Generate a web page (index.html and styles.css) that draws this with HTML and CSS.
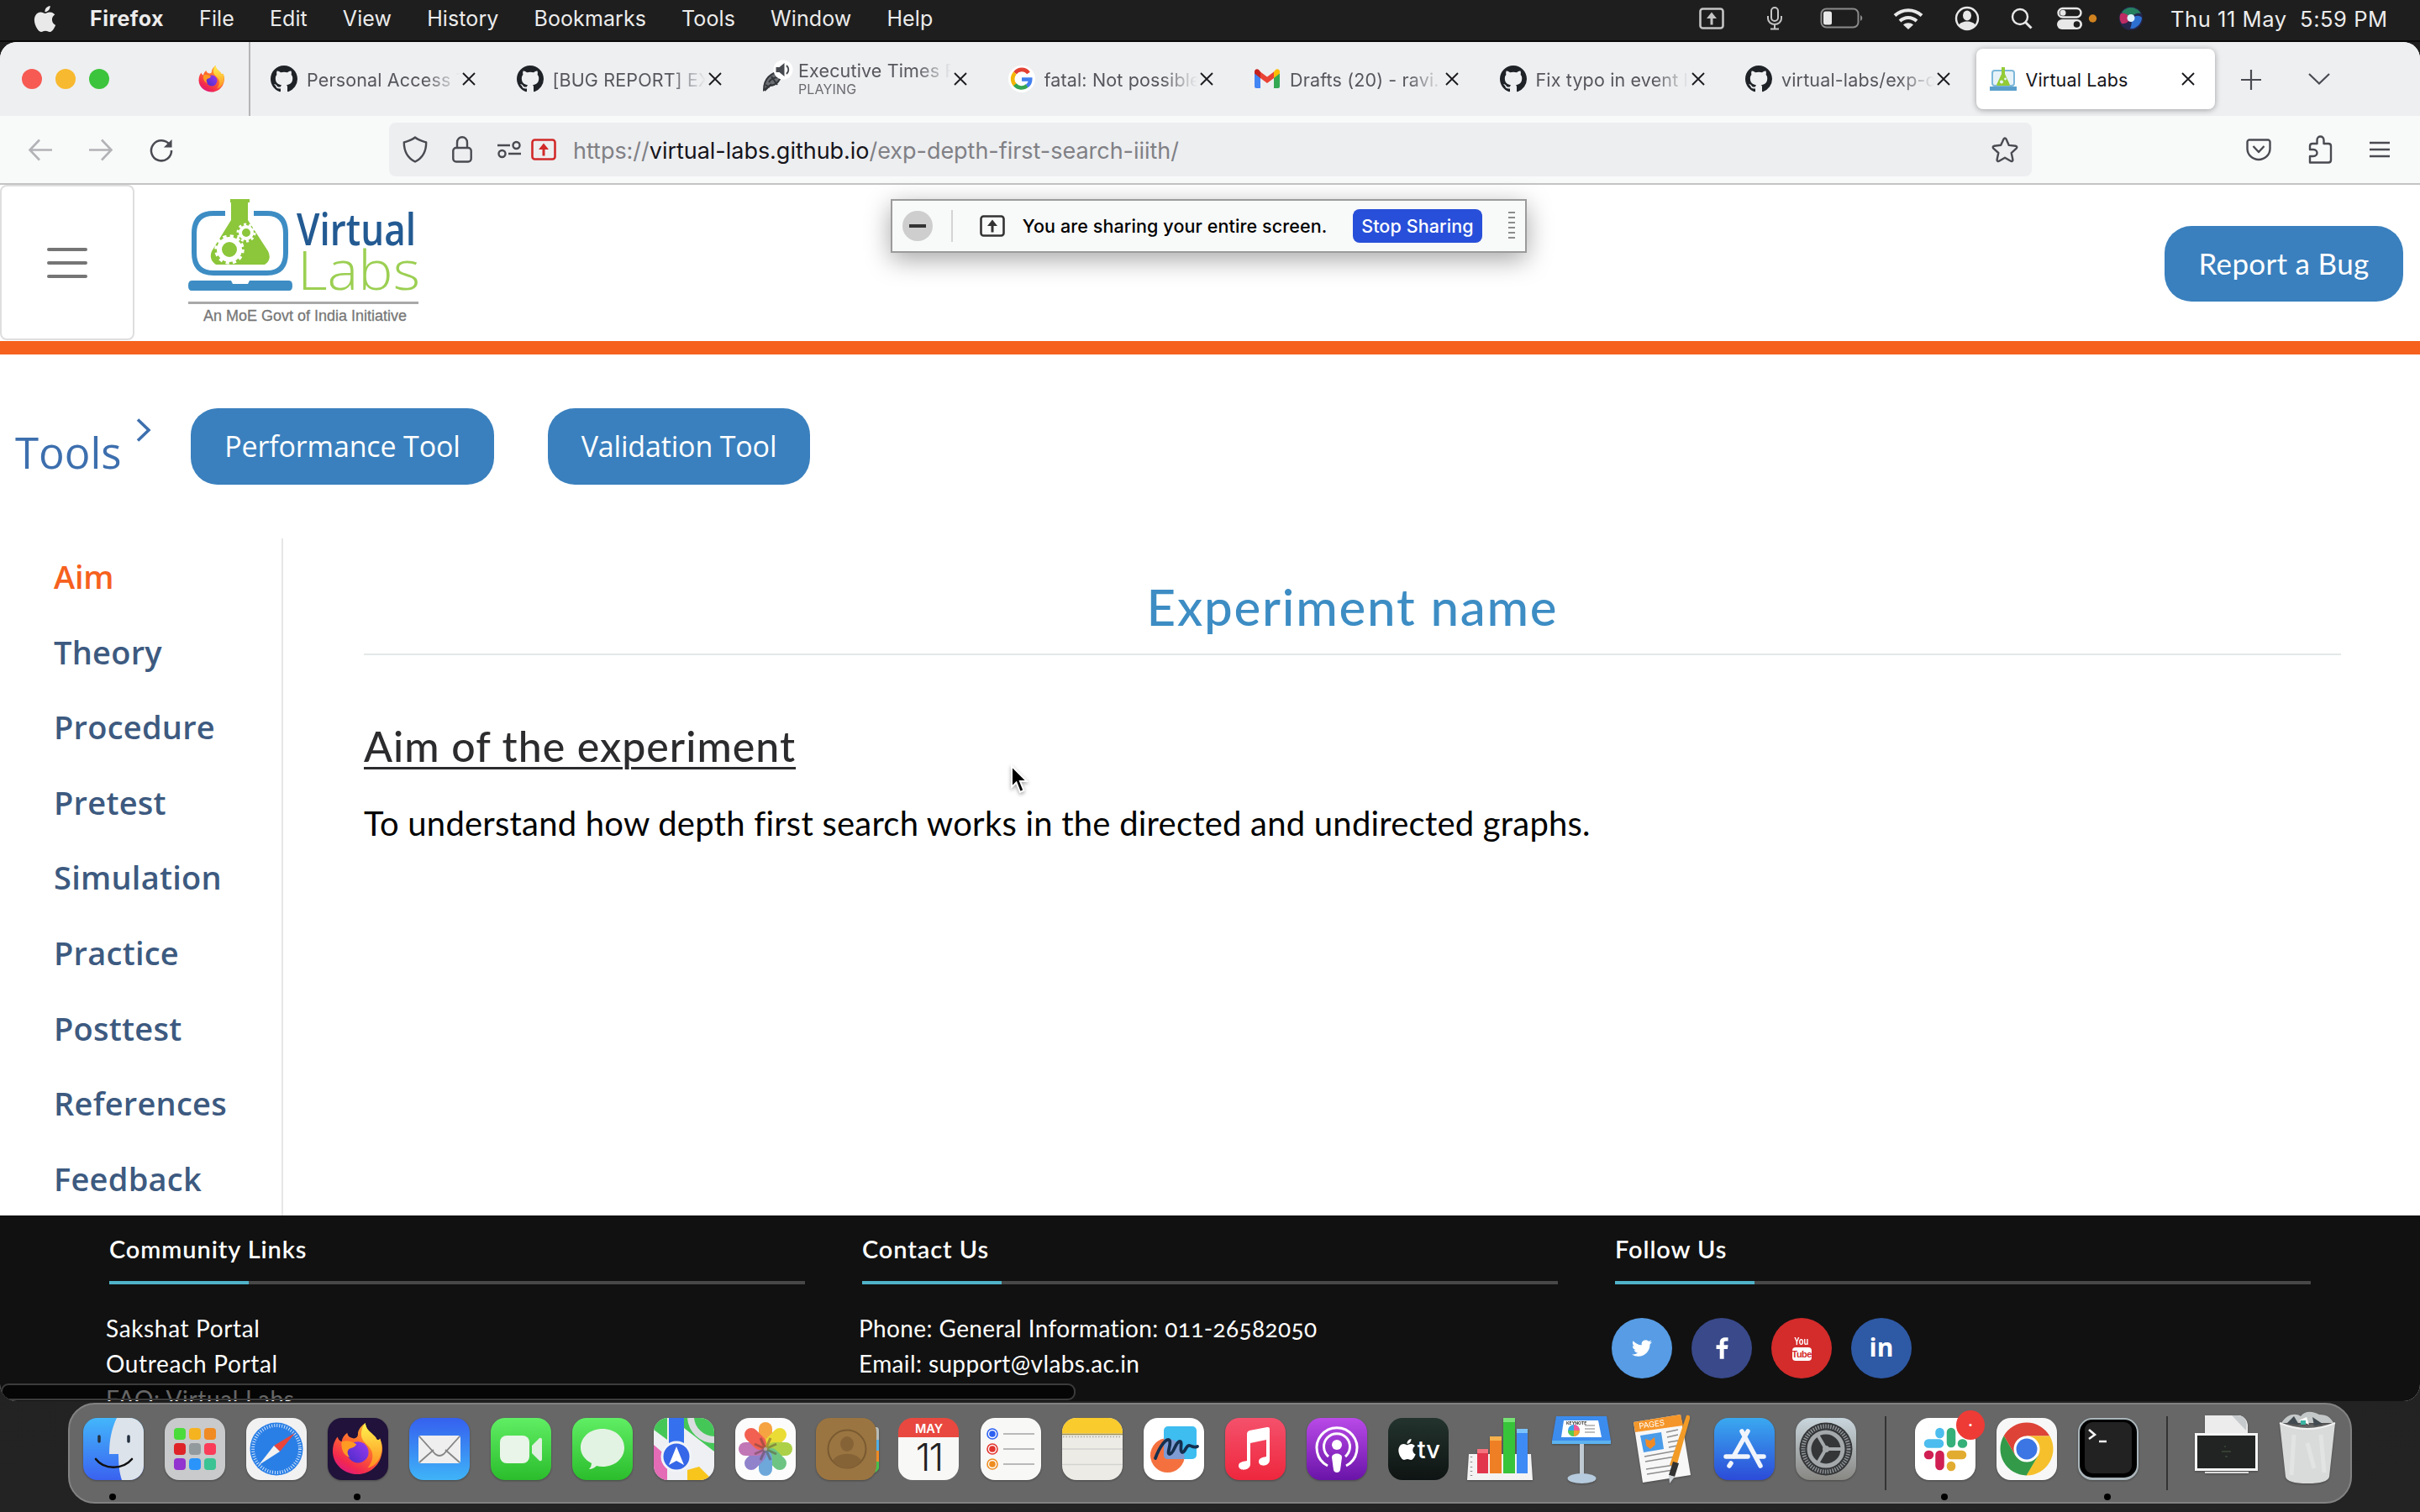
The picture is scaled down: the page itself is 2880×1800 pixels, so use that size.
FILE: index.html
```html
<!DOCTYPE html>
<html lang="en">
<head>
<meta charset="utf-8">
<title>Virtual Labs</title>
<link rel="stylesheet" href="styles.css">
</head>
<body>
<svg class="defs" width="0" height="0" aria-hidden="true">
  <defs>
    <symbol id="github" viewBox="0 0 16 16"><path fill="#1f2328" d="M8 0C3.58 0 0 3.58 0 8c0 3.54 2.29 6.53 5.47 7.59.4.07.55-.17.55-.38 0-.19-.01-.82-.01-1.49-2.01.37-2.53-.49-2.69-.94-.09-.23-.48-.94-.82-1.13-.28-.15-.68-.52-.01-.53.63-.01 1.08.58 1.23.82.72 1.21 1.87.87 2.33.66.07-.52.28-.87.51-1.07-1.78-.2-3.64-.89-3.64-3.95 0-.87.31-1.59.82-2.15-.08-.2-.36-1.02.08-2.12 0 0 .67-.21 2.2.82.64-.18 1.32-.27 2-.27.68 0 1.36.09 2 .27 1.53-1.04 2.2-.82 2.2-.82.44 1.1.16 1.92.08 2.12.51.56.82 1.27.82 2.15 0 3.07-1.87 3.75-3.65 3.95.29.25.54.73.54 1.48 0 1.07-.01 1.93-.01 2.2 0 .21.15.46.55.38A8.013 8.013 0 0016 8c0-4.42-3.58-8-8-8z"/></symbol>
    <symbol id="apple" viewBox="0 0 24 24"><path d="M12.152 6.896c-.948 0-2.415-1.078-3.96-1.04-2.04.027-3.91 1.183-4.961 3.014-2.117 3.675-.546 9.103 1.519 12.09 1.013 1.454 2.208 3.09 3.792 3.039 1.52-.065 2.09-.987 3.935-.987 1.831 0 2.35.987 3.96.948 1.637-.026 2.676-1.48 3.676-2.948 1.156-1.688 1.636-3.325 1.662-3.415-.039-.013-3.182-1.221-3.22-4.857-.026-3.04 2.48-4.494 2.597-4.559-1.429-2.09-3.623-2.324-4.39-2.376-2-.156-3.675 1.09-4.61 1.09zM15.53 3.83c.843-1.012 1.4-2.427 1.245-3.83-1.207.052-2.662.805-3.532 1.818-.78.896-1.454 2.338-1.273 3.714 1.338.104 2.715-.688 3.559-1.701"/></symbol>
    <symbol id="close" viewBox="0 0 18 18"><path d="M2 2l14 14M16 2L2 16" stroke="#1c1c20" stroke-width="1.9" fill="none"/></symbol>
    <symbol id="share" viewBox="0 0 30 26"><rect x="1.5" y="1.5" width="27" height="23" rx="3" fill="none" stroke="currentColor" stroke-width="2.6"/><path d="M15 5.500l6 7.500h-4.500v7.500h-3V13H9z" fill="currentColor"/></symbol>
    <symbol id="fox" viewBox="0 0 64 64">
      <path fill="url(#foxBody)" d="M7 17c1 4 3 5 5 6 1-6 4-9 7-11 0 4 3 6 8 7 5-1 5-4 5-7 1-5 5-9 9-12 1 7 4 9 8 13 3 3 5 4 6 7 2 1 3 1 4-1 3 7 4 13 2 20-3 14-15 24-29 24C16 63 2 52 1 36 1 27 3 22 7 17z"/>
      <path fill="url(#foxTail)" d="M41 0c1 7 4 9 8 13 3 3 5 4 6 7 2 1 3 1 4-1 3 9 3 17-1 25-3 6-9 10-14 11 7-8 8-18 2-25-4-5-9-7-10-15 0-6 2-12 5-15z"/>
      <circle cx="32" cy="36" r="13" fill="url(#foxOrb)"/>
      <path fill="#ff9a22" d="M12 23c6-2 12-1 18 3-1 4-6 4-9 6-3 3-2 7 1 10-8-2-11-10-10-19z"/>
    </symbol>
    <linearGradient id="foxBody" x1=".8" y1="0" x2=".2" y2="1"><stop offset="0" stop-color="#ffbd2e"/><stop offset=".45" stop-color="#ff6a2f"/><stop offset=".8" stop-color="#f2284f"/><stop offset="1" stop-color="#d9188a"/></linearGradient>
    <linearGradient id="foxTail" x1="0" y1="0" x2="0" y2="1"><stop offset="0" stop-color="#fff44f"/><stop offset="1" stop-color="#ff8f20"/></linearGradient>
    <linearGradient id="foxOrb" x1="1" y1="0" x2="0" y2="1"><stop offset="0" stop-color="#9a3bf0"/><stop offset="1" stop-color="#4a2bc8"/></linearGradient>
  </defs>
</svg>

<div class="desktop">
  <header class="menubar">
    <svg class="apple"><use href="#apple"/></svg>
    <nav class="menus">
      <span class="menu app">Firefox</span><span class="menu">File</span><span class="menu">Edit</span><span class="menu">View</span><span class="menu">History</span><span class="menu">Bookmarks</span><span class="menu">Tools</span><span class="menu">Window</span><span class="menu">Help</span>
    </nav>
    <div class="status">
      <svg class="s-share"><use href="#share"/></svg>
      <svg viewBox="0 0 20 28" width="20" height="28"><g fill="none" stroke="#c4c4c4" stroke-width="2"><rect x="6" y="1" width="8" height="16" rx="4"/><path d="M2 11v3a8 7 0 0016 0v-3M10 21v5M5 26.500h10"/></g></svg>
      <svg viewBox="0 0 52 26" width="52" height="26"><rect x="1.500" y="1.500" width="44" height="22" rx="6" fill="none" stroke="#8b8b8b" stroke-width="2"/><rect x="4" y="4.500" width="10" height="16" rx="2.500" fill="#e8e8e8"/><path d="M48 9c3 1.500 3 5.500 0 7z" fill="#8b8b8b"/></svg>
      <svg viewBox="0 0 36 26" width="36" height="26"><g fill="none" stroke="#e8e8e8" stroke-width="4"><path d="M2 9.500c9-8.500 23-8.500 32 0"/><path d="M8 16c6-5.500 14-5.500 20 0"/></g><path d="M12 20.500c3.500-3 8.500-3 12 0l-6 5.500z" fill="#e8e8e8"/></svg>
      <svg viewBox="0 0 30 30" width="30" height="30"><circle cx="15" cy="15" r="13" fill="none" stroke="#e8e8e8" stroke-width="2.400"/><ellipse cx="15" cy="11.500" rx="5" ry="6" fill="#e8e8e8"/><path d="M5 23c3-6 17-6 20 0-5 6-15 6-20 0z" fill="#e8e8e8"/></svg>
      <svg viewBox="0 0 26 26" width="26" height="26"><circle cx="11" cy="11" r="9" fill="none" stroke="#e8e8e8" stroke-width="2.400"/><path d="M17.500 17.500l7 7" stroke="#e8e8e8" stroke-width="3"/></svg>
      <svg viewBox="0 0 48 28" width="48" height="28"><rect x="1.500" y="2" width="27" height="10.500" rx="5.250" fill="none" stroke="#e8e8e8" stroke-width="2.400"/><circle cx="7" cy="7.200" r="3.500" fill="#e8e8e8"/><rect x="0" y="15" width="30" height="12" rx="6" fill="#e8e8e8"/><circle cx="23.500" cy="21" r="3.800" fill="#1e1e1e"/><circle cx="42.500" cy="14" r="4.700" fill="#d0821f"/></svg>
      <svg viewBox="0 0 28 28" width="28" height="28"><circle cx="14" cy="14" r="14" fill="#24264c"/><path d="M3 7C9-2 22 0 26 8c-6-1-8 1-12 5z" fill="#258060"/><path d="M2 8c5-1 9 2 12 6-3 4-7 7-11 6-3-4-3-9-1-12z" fill="#bd2c62"/><path d="M14 14c6-4 10-4 13-1 0 6-6 14-14 13 2-4 2-8 1-12z" fill="#2c6fd0"/><circle cx="14" cy="13.500" r="4.500" fill="#dff2ff"/></svg>
      <span class="clock">Thu 11 May&nbsp; 5:59 PM</span>
    </div>
  </header>

  <main class="window">
    <div class="tabstrip">
      <div class="lights"><i class="red"></i><i class="amber"></i><i class="green"></i></div>
      <svg class="view-fox"><use href="#fox"/></svg>
      <div class="tabs">
        <div class="tab"><svg class="fav"><use href="#github"/></svg><span class="label fade">Personal Access T</span><svg class="x"><use href="#close"/></svg></div>
        <div class="tab"><svg class="fav"><use href="#github"/></svg><span class="label fade">[BUG REPORT] EX</span><svg class="x"><use href="#close"/></svg></div>
        <div class="tab"><svg class="fav wide" viewBox="0 0 36 40"><g fill="none" stroke="#33363a" stroke-width="2"><path d="M2 36c0-13 8-21 21-22 0 10-6 17-14 17z" fill="#6b6e72"/><path d="M3 37l8-8M8 27c3-5 8-6 12-6M11 20l7 10M4 30l5 3"/></g><circle cx="25" cy="12" r="11.500" fill="#fff"/><path d="M16.500 9h4l6-5v16l-6-5h-4z" fill="#46494e"/><path d="M29 7c3 3 3 7 0 10" fill="none" stroke="#46494e" stroke-width="2"/></svg><span class="label duo fade"><span>Executive Times F</span><small>PLAYING</small></span><svg class="x"><use href="#close"/></svg></div>
        <div class="tab"><svg class="fav" viewBox="0 0 32 32"><circle cx="16" cy="16" r="16" fill="#fff"/><g fill="none" stroke-width="4.600"><path d="M24 9a10 10 0 00-16-.2" stroke="#e34133"/><path d="M8 8.800a10.500 10.500 0 000 14.400" stroke="#f3b605"/><path d="M7.800 22.800a10 10 0 0014.500 1.100" stroke="#34a553"/><path d="M16 16.500h10.200c0 3.500-1.300 6-4 7.800" stroke="#4280ef"/></g></svg><span class="label fade">fatal: Not possible</span><svg class="x"><use href="#close"/></svg></div>
        <div class="tab"><svg class="fav" viewBox="0 0 32 32"><path d="M1 8v17q0 2 2 2h5V13z" fill="#4285f4"/><path d="M31 8v17q0 2-2 2h-5V13z" fill="#34a853"/><path d="M24 7.500V15l7-5.500V7.500c0-3-3-4-5-2.500z" fill="#fbbc04"/><path d="M8 7.500V15l8 6 8-6V7.500l-8 6z" fill="#ea4335"/><path d="M8 7.500V15L1 9.500v-2C1 4.500 4 3.500 6 5z" fill="#c5221f"/></svg><span class="label fade">Drafts (20) - ravi.</span><svg class="x"><use href="#close"/></svg></div>
        <div class="tab"><svg class="fav"><use href="#github"/></svg><span class="label fade">Fix typo in event l</span><svg class="x"><use href="#close"/></svg></div>
        <div class="tab"><svg class="fav"><use href="#github"/></svg><span class="label fade">virtual-labs/exp-d</span><svg class="x"><use href="#close"/></svg></div>
        <div class="tab active"><svg class="fav" viewBox="0 0 32 32"><rect x="3" y="6" width="26" height="18" rx="3" fill="#e7f2f8" stroke="#7db8da" stroke-width="2"/><path d="M14 2h4v8l6 13q0 1-2 1H10q-2 0-2-1l6-13z" fill="#93cb36"/><circle cx="14" cy="19.500" r="2" fill="#e7f2f8"/><circle cx="18.500" cy="16" r="1.400" fill="#e7f2f8"/><path d="M0 25h32v5H0z" fill="#5a9fcc"/></svg><span class="label">Virtual Labs</span><svg class="x"><use href="#close"/></svg></div>
      </div>
      <svg class="newtab" viewBox="0 0 24 24"><path d="M12 0v24M0 12h24" stroke="#4a4a52" stroke-width="2.200"/></svg>
      <svg class="alltabs" viewBox="0 0 26 14"><path d="M1 1l12 11.500L25 1" fill="none" stroke="#4a4a52" stroke-width="2.200"/></svg>
    </div>

    <div class="toolbar">
      <svg class="nav dim" viewBox="0 0 28 26"><path d="M28 13H2M13 1L1.500 13 13 25"/></svg>
      <svg class="nav dim" viewBox="0 0 28 26"><path d="M0 13h26M15 1l11.500 12L15 25"/></svg>
      <svg class="nav" viewBox="0 0 28 28"><path d="M24.500 8A12.500 12.500 0 1026.500 14.500"/><path d="M27 1v10H17z" fill="#4a4a52" stroke="none"/></svg>
      <div class="urlbar">
        <svg class="u" viewBox="0 0 30 32"><path d="M15 1.500C11 5 6 6 1.800 7.500c0 11 4 18.500 13.200 23 9.200-4.500 13.200-12 13.200-23C24 6 19 5 15 1.500z"/></svg>
        <svg class="u" viewBox="0 0 24 32"><rect x="1.300" y="14" width="21.400" height="16.500" rx="3.500"/><path d="M6 14V8c0-9 12-9 12 0v6"/></svg>
        <svg class="u" viewBox="0 0 28 20"><path d="M0 5h15M13 15h15"/><circle cx="22.500" cy="5" r="4"/><circle cx="5.500" cy="15" r="4"/></svg>
        <svg class="u-share"><use href="#share"/></svg>
        <span class="url">https://<b>virtual-labs.github.io</b>/exp-depth-first-search-iiith/</span>
        <svg class="star" viewBox="0 0 32 32"><path d="M16 2.500c.7 0 1.200.4 1.500 1l3.300 7.400 8 .9c1.500.2 2 1.900.9 2.900l-6 5.400 1.700 7.900c.3 1.400-1.200 2.500-2.400 1.800L16 25.800l-7 4c-1.200.7-2.700-.4-2.400-1.800L8.300 20l-6-5.400c-1.100-1-.6-2.700.9-2.900l8-.9 3.300-7.300c.3-.6.8-1 1.500-1z"/></svg>
      </div>
      <svg class="t t1" viewBox="0 0 30 28"><path d="M4 2.500h22a2.500 2.500 0 012.500 2.500v8a13.500 13 0 01-27 0V5A2.500 2.500 0 014 2.500zM8.500 10l6.500 7 6.500-7"/></svg>
      <svg class="t t2" viewBox="0 0 30 34"><path d="M3 32.500h22q3 0 3-3V13q0-3-3-3h-5.500V6c0-6-8-6-8 0v4H6q-3 0-3 3v4h4c6 0 6 8 0 8H3z"/></svg>
      <svg class="t t3" viewBox="0 0 24 20"><path d="M0 2h24M0 10h24M0 18h24"/></svg>
    </div>

    <section class="page">
      <header class="site-header">
        <button class="toggler" aria-label="Menu"><i></i><i></i><i></i></button>
        <svg class="logo" viewBox="224 236 278 152">
          <path d="M268 254h-14q-23 0-23 24v23q0 24 23 24h64q22 0 22-24v-23q0-24-22-24h-16" fill="none" stroke="#3d8dc4" stroke-width="6"/>
          <path d="M274 237h23v4h-2v21l24 37q5 10-4 16h-58q-9-6-5-16l23-37v-21h-1z" fill="#8cc63b"/>
          <circle cx="273" cy="297" r="12" fill="none" stroke="#fff" stroke-width="6"/><circle cx="273" cy="297" r="16" fill="none" stroke="#fff" stroke-width="3.500" stroke-dasharray="4.200 4.200"/>
          <circle cx="293" cy="277" r="7" fill="none" stroke="#fff" stroke-width="4"/><circle cx="293" cy="277" r="10" fill="none" stroke="#fff" stroke-width="3" stroke-dasharray="3 3.280"/>
          <path d="M228 334h47l2 4h18l2-4h47q4 0 4 6t-4 6H228q-4 0-4-6t4-6z" fill="#3d8dc4"/>
          <text x="353" y="291.500" class="logo-virtual" textLength="142" lengthAdjust="spacingAndGlyphs">Virtual</text>
          <text x="354" y="345" class="logo-labs" textLength="146" lengthAdjust="spacingAndGlyphs">Labs</text>
          <path d="M224 360.500h274" stroke="#a9a9a9" stroke-width="3"/>
          <text x="242" y="382" class="logo-sub" textLength="242" lengthAdjust="spacingAndGlyphs">An MoE Govt of India Initiative</text>
        </svg>
        <button class="pill bug">Report a Bug</button>
      </header>

      <div class="tools">
        <span class="tools-title">Tools</span>
        <svg class="tools-chev" viewBox="0 0 18 28"><path d="M2 1.500L15 14 2 26.500"/></svg>
        <button class="pill perf">Performance Tool</button>
        <button class="pill valid">Validation Tool</button>
      </div>

      <div class="body">
        <nav class="sidebar">
          <a class="current">Aim</a><a>Theory</a><a>Procedure</a><a>Pretest</a><a>Simulation</a><a>Practice</a><a>Posttest</a><a>References</a><a>Feedback</a>
        </nav>
        <article class="content">
          <h1>Experiment name</h1>
          <h2>Aim of the experiment</h2>
          <p>To understand how depth first search works in the directed and undirected graphs.</p>
        </article>
      </div>

      <footer class="footer">
        <div class="col">
          <h3>Community Links</h3>
          <p class="wide">Sakshat Portal</p><p class="wide">Outreach Portal</p><p class="wide">FAQ: Virtual Labs</p>
        </div>
        <div class="col">
          <h3>Contact Us</h3>
          <p>Phone: General Information: 011-26582050</p><p>Email: support@vlabs.ac.in</p>
        </div>
        <div class="col">
          <h3>Follow Us</h3>
          <div class="social">
            <a class="tw"><svg viewBox="0 0 24 24" width="24" height="24"><path fill="#fff" d="M23.953 4.570a10 10 0 01-2.825.775 4.958 4.958 0 002.163-2.723c-.951.555-2.005.959-3.127 1.184a4.920 4.920 0 00-8.384 4.482C7.690 8.095 4.067 6.130 1.640 3.162a4.822 4.822 0 00-.666 2.475c0 1.710.870 3.213 2.188 4.096a4.904 4.904 0 01-2.228-.616v.060a4.923 4.923 0 003.946 4.827 4.996 4.996 0 01-2.212.085 4.936 4.936 0 004.604 3.417 9.867 9.867 0 01-6.102 2.105c-.390 0-.779-.023-1.170-.067a13.995 13.995 0 007.557 2.209c9.053 0 13.998-7.496 13.998-13.985 0-.210 0-.420-.015-.630A9.935 9.935 0 0024 4.590z"/></svg></a>
            <a class="fb"><svg viewBox="5 0 14 24" width="15" height="26"><path fill="#fff" d="M14 24V13h4l.6-4.400H14V6c0-1.300.4-2 2.200-2h2.400V.2C18.100.1 16.800 0 15.200 0 11.700 0 9.400 2.100 9.400 5.700V8.600H5.500V13h3.900v11z"/></svg></a>
            <a class="yt"><span class="you">You</span><span class="tube">Tube</span></a>
            <a class="li">in</a>
          </div>
        </div>
      </footer>
      <div class="hscroll"></div>
    </section>

    <div class="sharebar">
      <i class="min"></i><i class="sep"></i>
      <svg class="sb-share"><use href="#share"/></svg>
      <span class="sb-text">You are sharing your entire screen.</span>
      <button class="stop">Stop Sharing</button>
      <i class="grip"></i>
    </div>
  </main>

  <div class="dock">
    <div class="ic run"><svg viewBox="0 0 72 74"><defs><linearGradient id="g1" x1="0" y1="0" x2="0" y2="1"><stop offset="0" stop-color="#43b6fb"/><stop offset="1" stop-color="#3a62f0"/></linearGradient><clipPath id="rr"><rect width="72" height="74" rx="17"/></clipPath></defs><g clip-path="url(#rr)"><path fill="url(#g1)" d="M0 0h72v74H0z"/><path d="M40 0c-6 12-9 26-9 43h11c0 12 1 22 4 31h26V0z" fill="#dde3ea"/></g><path d="M19 22v6M54 22v6" stroke="#22303f" stroke-width="3.500" stroke-linecap="round"/><path d="M15 49c10 13 32 13 43 0" fill="none" stroke="#111" stroke-width="2.600" stroke-linecap="round"/></svg></div>
    <div class="ic"><svg viewBox="0 0 72 74"><rect width="72" height="74" rx="17" fill="#c9cacb"/><g><rect x="11" y="12" width="14" height="14" rx="4" fill="#4bdc3b"/><rect x="29" y="12" width="14" height="14" rx="4" fill="#f5b320"/><rect x="47" y="12" width="14" height="14" rx="4" fill="#f08a22"/><rect x="11" y="30" width="14" height="14" rx="4" fill="#df2428"/><rect x="29" y="30" width="14" height="14" rx="4" fill="#939a9d"/><rect x="47" y="30" width="14" height="14" rx="4" fill="#fb3c58"/><rect x="11" y="48" width="14" height="14" rx="4" fill="#9232cf"/><rect x="29" y="48" width="14" height="14" rx="4" fill="#2a94fb"/><rect x="47" y="48" width="14" height="14" rx="4" fill="#3bc393"/></g></svg></div>
    <div class="ic"><svg viewBox="0 0 72 74"><rect width="72" height="74" rx="17" fill="#f1f1f2"/><circle cx="36" cy="37" r="31.500" fill="#2a7fe6"/><circle cx="36" cy="37" r="28" fill="none" stroke="#cfe4fb" stroke-width="4" stroke-dasharray="1 2"/><path d="M58 18L33 33l7 7z" fill="#e9453b"/><path d="M15 56l18-23 7 7z" fill="#f2f2f2"/></svg></div>
    <div class="ic run"><svg viewBox="0 0 72 74"><rect width="72" height="74" rx="17" fill="#20123a"/><use href="#fox" x="5" y="4" width="62" height="66"/></svg></div>
    <div class="ic"><svg viewBox="0 0 72 74"><defs><linearGradient id="g5" x1="0" y1="0" x2="0" y2="1"><stop offset="0" stop-color="#3560ef"/><stop offset="1" stop-color="#3fb4f8"/></linearGradient></defs><rect width="72" height="74" rx="17" fill="url(#g5)"/><rect x="11" y="21" width="50" height="33" rx="3" fill="#efefef"/><path d="M12 22l19 21q5 4 10 0l19-21M12 53l17-15M60 53L43 38" fill="none" stroke="#858585" stroke-width="1.800"/></svg></div>
    <div class="ic"><svg viewBox="0 0 72 74"><defs><linearGradient id="g6" x1="0" y1="0" x2="0" y2="1"><stop offset="0" stop-color="#60ee64"/><stop offset="1" stop-color="#2bbd2c"/></linearGradient></defs><rect width="72" height="74" rx="17" fill="url(#g6)"/><rect x="11" y="21" width="35" height="33" rx="8" fill="#e9f5e8"/><path d="M49 33l9-9q3-1 3 2v23q0 3-3 2l-9-9z" fill="#dff0df"/></svg></div>
    <div class="ic"><svg viewBox="0 0 72 74"><rect width="72" height="74" rx="17" fill="url(#g6)"/><path d="M36 13c15 0 26 10 26 22.500S51 58 36 58q-4 0-7-1-4 4-9 4 3-3 3-7C15 50 10 43 10 35.500 10 23 21 13 36 13z" fill="#e3f3e3"/></svg></div>
    <div class="ic"><svg viewBox="0 0 72 74"><g clip-path="url(#rr)"><path fill="#eef0f3" d="M0 0h72v74H0z"/><path d="M0 0h16v26L0 14zM36 0h36v40L36 20z" fill="#45c758"/><path d="M44 0c1 14 13 26 28 26" fill="none" stroke="#dadde0" stroke-width="8"/><path d="M36 20l36 32v-12L36 12z" fill="#eef0f3"/><path d="M0 32l16 14v28H0z" fill="#e46bb5"/><path d="M40 74V62l14-4 16 16z" fill="#f8c51c"/><path d="M18 0h18v36H18z" fill="#3571ee"/></g><circle cx="27" cy="46" r="18.500" fill="#f2f4f8"/><circle cx="27" cy="46" r="15.500" fill="#3567e8"/><path d="M27 34l9 22-9-5-9 5z" fill="#fff"/></svg></div>
    <div class="ic"><svg viewBox="0 0 72 74"><rect width="72" height="74" rx="17" fill="#fcfcfc"/><g opacity=".9"><rect x="28" y="5" width="16" height="30" rx="8" fill="#f69a2d"/><rect x="28" y="5" width="16" height="30" rx="8" fill="#e9d91f" transform="rotate(45 36 37)"/><rect x="28" y="5" width="16" height="30" rx="8" fill="#a4cd35" transform="rotate(90 36 37)"/><rect x="28" y="5" width="16" height="30" rx="8" fill="#5fbf76" transform="rotate(135 36 37)"/><rect x="28" y="5" width="16" height="30" rx="8" fill="#5f9fd8" transform="rotate(180 36 37)"/><rect x="28" y="5" width="16" height="30" rx="8" fill="#8575c6" transform="rotate(225 36 37)"/><rect x="28" y="5" width="16" height="30" rx="8" fill="#bb68ae" transform="rotate(270 36 37)"/><rect x="28" y="5" width="16" height="30" rx="8" fill="#f1503f" transform="rotate(315 36 37)"/></g><path d="M36 37l-6-13M36 37l6-13M36 37l-13-6M36 37l13-6M36 37l-13 6M36 37l13 6M36 37l-6 13M36 37l6 13" stroke="#5a3b36" stroke-opacity=".45" stroke-width="3"/></svg></div>
    <div class="ic"><svg viewBox="0 0 72 74"><path d="M66 11h5q3 0 3 4v11h-8z" fill="#b9bdb9"/><path d="M66 26h8v13h-8z" fill="#4fb0e8"/><path d="M66 39h8v13h-8z" fill="#f08a25"/><path d="M66 52h8v8q-2 5-8 6z" fill="#47c04c"/><rect x="-1" width="72" height="74" rx="17" fill="#9b7541"/><g fill="none" stroke="#795a31" stroke-width="2"><circle cx="36" cy="37" r="22.500"/></g><ellipse cx="36" cy="31" rx="8" ry="9" fill="#866337"/><path d="M19 51c5-11 29-11 34 0-9 12-25 12-34 0z" fill="#866337"/></svg></div>
    <div class="ic cal"><span class="mon">MAY</span><span class="day">11</span></div>
    <div class="ic"><svg viewBox="0 0 72 74"><rect width="72" height="74" rx="17" fill="#f8f8f7"/><path d="M27 19h37M27 37h37M27 55h37" stroke="#b9b9b9" stroke-width="2"/><g fill="#fff" stroke-width="1.600"><circle cx="14" cy="19" r="6" stroke="#2d61f0"/><circle cx="14" cy="37" r="6" stroke="#e2352f"/><circle cx="14" cy="55" r="6" stroke="#ee8d20"/></g><circle cx="14" cy="19" r="3.800" fill="#2d61f0"/><circle cx="14" cy="37" r="3.800" fill="#e2352f"/><circle cx="14" cy="55" r="3.800" fill="#ee8d20"/></svg></div>
    <div class="ic"><svg viewBox="0 0 72 74"><g clip-path="url(#rr)"><path fill="#ecebe5" d="M0 0h72v74H0z"/><path fill="#f9cb2c" d="M0 0h72v18.500H0z"/></g><path d="M0 19.500h72" stroke="#9e9052" stroke-width="1.500"/><path d="M1 22.500h70" stroke="#a9a9a5" stroke-width="1.500" stroke-dasharray="1.500 2"/><path d="M0 37h72M0 55.500h72" stroke="#d2d2d2" stroke-width="1.500"/></svg></div>
    <div class="ic"><svg viewBox="0 0 72 74"><rect width="72" height="74" rx="17" fill="#fff"/><circle cx="28.500" cy="44.500" r="20.500" fill="#f4713f"/><rect x="24" y="10" width="39" height="39" rx="5" fill="#3dbdf0"/><path d="M24 25q20-2 25 22l-1 2H29q-5 0-5-5z" fill="#7e9bd3"/><path d="M14 48c5-14 14-26 17-21 2 5-4 16 0 16 5 0 7-15 12-15 4 0-1 12 3 13 4 0 4-9 9-8 4 1 4 3 9 1" fill="none" stroke="#15304f" stroke-width="3.800" stroke-linecap="round"/></svg></div>
    <div class="ic"><svg viewBox="0 0 72 74"><defs><linearGradient id="g15" x1="0" y1="0" x2="0" y2="1"><stop offset="0" stop-color="#f5516c"/><stop offset="1" stop-color="#ee273d"/></linearGradient></defs><rect width="72" height="74" rx="17" fill="url(#g15)"/><path d="M26 19q0-3 3-4l21-4q3-.5 3 2v37c0 8-13 9-13 2 0-4 4-5 9-6V26l-19 4v25c0 8-14 9-14 2 0-4 4-5 10-6z" fill="#fff"/></svg></div>
    <div class="ic"><svg viewBox="0 0 72 74"><defs><linearGradient id="g16" x1="0" y1="0" x2="0" y2="1"><stop offset="0" stop-color="#b94ae8"/><stop offset="1" stop-color="#6a14a8"/></linearGradient></defs><rect width="72" height="74" rx="17" fill="url(#g16)"/><g fill="none" stroke="#fff" stroke-width="3"><path d="M25 57a24 24 0 1122 0"/><path d="M26 46a15.500 15.500 0 1120 0"/></g><circle cx="36" cy="32" r="6" fill="#fff"/><path d="M30 47c0-6 12-6 12 0l-2 15c-1 4-7 4-8 0z" fill="#fff"/></svg></div>
    <div class="ic tv"><svg class="tv-apple"><use href="#apple"/></svg><span>tv</span></div>
    <div class="ic"><svg viewBox="0 0 72 74"><path d="M-1 43h74l2 31H-3z" fill="#f3f3f3"/><path d="M2 46v1M2 52v1M2 58v1M2 63v1M2 68v1" stroke="#888" stroke-width="2.500"/><path d="M9 37h13v29H9z" fill="#e2364c"/><path d="M24 22h14v44H24z" fill="#ef7f25"/><path d="M40 0h14v66H40z" fill="#38c43a"/><path d="M56 13h13v53H56z" fill="#3f8bf5"/><path d="M9 37h13v5H9z" fill="#f4727e"/><path d="M24 22h14v5H24z" fill="#f7b24d"/><path d="M40 0h14v5H40z" fill="#76e374"/><path d="M56 13h13v5H56z" fill="#7cc3fb"/></svg></div>
    <div class="ic"><svg viewBox="0 0 72 74"><path d="M34 30h5v42h-5z" fill="#bfc9d2"/><ellipse cx="36.500" cy="72" rx="17" ry="6" fill="#b6cbdd"/><path d="M6-2h60l5 29H1z" fill="#3c8cee"/><path d="M1 27h70v4H1z" fill="#5bb2ee"/><path d="M15 3h41l4 20H12z" fill="#fff"/><circle cx="27" cy="15" r="7" fill="#3aa5e8"/><path d="M27 15V8a7 7 0 017 7z" fill="#f25c9a"/><path d="M27 15h7a7 7 0 01-7 7z" fill="#f4a32c"/><path d="M27 15v7a7 7 0 01-7-7z" fill="#5ccb4c"/><path d="M40 9h12M40 13h12M40 17h12" stroke="#aaa" stroke-width="1.500"/><text x="18" y="7.500" class="tiny">KEYNOTE</text></svg></div>
    <div class="ic"><svg viewBox="0 0 72 74"><path d="M1 5l56-9 12 72-57 9z" fill="#f7f7f7"/><path d="M1 5l56-9 3 13L3 17z" fill="#f5962a"/><text x="8" y="13" class="pages-word" transform="rotate(-8 8 13)">PAGES</text><path d="M9 21l25-4 3 20-24 4z" fill="#4a9be8"/><path d="M15 25l6 2 5-4 1 9-6 5-5-4z" fill="#f28a24"/><path d="M40 17l14-3M41 23l13-3M42 29l12-2M43 35l10-2M14 46l38-7M15 52l36-6M16 61l34-5M17 67l31-5" stroke="#8d8d8d" stroke-width="1.300"/><path d="M64-3q5-1 4 4L52 58l-8-2z" fill="#f29b27"/><path d="M48 52l7 2-5 16-7-2z" fill="#333"/><path d="M43 68l7 2-6 8z" fill="#cfd4d8"/></svg></div>
    <div class="ic"><svg viewBox="0 0 72 74"><defs><linearGradient id="g21" x1="0" y1="0" x2="0" y2="1"><stop offset="0" stop-color="#3aa9f0"/><stop offset="1" stop-color="#2c4bd8"/></linearGradient></defs><rect width="72" height="74" rx="17" fill="url(#g21)"/><g stroke="#f1f5fb" stroke-width="5.500" stroke-linecap="round"><path d="M40 16L23 46M33 16l22 41M14 46h26M50 46h9M20 54l-2 3"/></g></svg></div>
    <div class="ic"><svg viewBox="0 0 72 74"><defs><linearGradient id="g22" x1="0" y1="0" x2="0" y2="1"><stop offset="0" stop-color="#c9d6dd"/><stop offset="1" stop-color="#888783"/></linearGradient></defs><rect width="72" height="74" rx="17" fill="url(#g22)"/><circle cx="36" cy="37" r="31.500" fill="#343638"/><g fill="none" stroke="#8e9296"><circle cx="36" cy="37" r="27" stroke-width="5" stroke-dasharray="1.500 1.500"/><circle cx="36" cy="37" r="20" stroke-width="5" stroke="#a4a8ab"/><path d="M36 37h20M36 37L26 20M36 37L26 54" stroke-width="4" stroke="#a4a8ab"/></g><circle cx="36" cy="37" r="4" fill="#a4a8ab"/></svg></div>
    <i class="div d1"></i>
    <div class="ic run"><svg viewBox="0 0 72 74"><rect width="72" height="74" rx="17" fill="#fff"/><g stroke-width="10.500" stroke-linecap="round"><path d="M16 30.500h13M29.500 17v2" stroke="#4cbdee"/><path d="M43 17v13M56 30.500h1" stroke="#36b079"/><path d="M43 44h13M43 57v1" stroke="#e2ac31"/><path d="M29.500 44v13M16 44h1" stroke="#d01f53"/></g></svg><i class="badge">·</i></div>
    <div class="ic"><svg viewBox="0 0 72 74"><rect width="72" height="74" rx="17" fill="#f7f7f7"/><path d="M8.700 21.300A31.500 31.500 0 0163.300 21.500H36L22.500 45z" fill="#dd4336"/><path d="M36 21.500h27.400A31.500 31.500 0 0136 68.500h-1L49.500 45z" fill="#f6c02c"/><path d="M8.700 21.300L22.500 45 49.500 45 35.500 68.500A31.500 31.500 0 018.700 21.300z" fill="#329a48"/><circle cx="36" cy="37" r="15.500" fill="#fff"/><circle cx="36" cy="37" r="12.500" fill="#3b76e4"/></svg></div>
    <div class="ic run"><svg viewBox="0 0 72 74"><rect width="72" height="74" rx="17" fill="#aab6bb"/><rect x="2" y="2" width="68" height="69" rx="15" fill="#000"/><rect x="8" y="5" width="56" height="61" rx="9" fill="#222"/><path d="M13 14l7 6-7 5M25 28h9" fill="none" stroke="#f2f2f2" stroke-width="2.600"/></svg></div>
    <i class="div d2"></i>
    <div class="ic"><svg viewBox="0 0 72 74"><path d="M11-3h42q8 3 9 11v14H11z" fill="#ececec"/><path d="M43-3l17 18q3-17-10-18z" fill="#c7cacd"/><path d="M-1 18h75v45H-1z" fill="#f5f5f5"/><path d="M2 21h69v39H2z" fill="#222423"/><path d="M11 65h52" stroke="#dcdcdc" stroke-width="2"/><path d="M31 40h11M34 34h2M35 46h3" stroke="#3d4838" stroke-width="1.500"/></svg></div>
    <div class="ic"><svg viewBox="0 0 72 74"><path d="M5 6C12-5 22-6 28-2c6-8 16-5 22-2 10 0 14 4 17 10z" fill="#c4c8c8"/><path d="M12 6l8-8 6 10zM44 9l-2-10 12 8z" fill="#414a50"/><path d="M26 3l9-4 3 9z" fill="#fff"/><path d="M28 3h6v5h-6z" fill="#3cb4a4"/><path d="M3 6q33 14 66 0l-7 64q-2 8-26 8t-26-8z" fill="#d9dada"/><path d="M3 6q33 14 66 0" fill="none" stroke="#f2f2f2" stroke-width="2"/><path d="M20 20l-3 48M52 20l4 45M36 30l8 30" stroke="#e2e3e3" stroke-width="5"/></svg></div>
  </div>

  <svg class="cursor" viewBox="0 0 22 36"><path d="M2 2v25l5.500-5.500L12 33l4.500-2L12 20h8z" fill="#000" stroke="#fff" stroke-width="2"/></svg>
</div>
</body>
</html>
```
FILE: styles.css
```css
* { box-sizing: border-box; }
body { margin: 0; background: #222; font-family: Inter, "Liberation Sans", sans-serif; overflow: hidden; }
svg { display: block; flex: none; overflow: visible; }
i { display: block; font-style: normal; }
button { border: 0; padding: 0; font: inherit; color: inherit; letter-spacing: inherit; }
h1, h2, h3, p { margin: 0; }
.defs { position: absolute; }
.desktop { position: relative; width: 2880px; height: 1800px; background: linear-gradient(#1e1e1e, #232323); overflow: hidden; }

/* macOS menu bar */
.menubar { height: 50px; padding: 0 38px 4px 38px; display: flex; align-items: center; background: #1e1e1e; border-bottom: 2px solid #0a0a0a; color: #ececec; font-size: 25px; white-space: nowrap; }
.apple { width: 31px; height: 31px; fill: #e9e9e9; }
.menus { display: flex; gap: 42px; margin-left: 38px; letter-spacing: .1px; }
.app { font-weight: 700; letter-spacing: .48px; }
.status { margin-left: auto; display: flex; align-items: center; }
.clock { width: 259px; font-size: 25.500px; letter-spacing: .56px; }
.s-share { width: 30px; height: 26px; color: #c4c4c4; margin-right: 50px; }
.status svg:nth-child(2) { margin-right: 44px; }
.status svg:nth-child(3) { margin-right: 35px; }
.status svg:nth-child(4) { margin-right: 37px; }
.status svg:nth-child(5) { margin-right: 37px; }
.status svg:nth-child(6) { margin-right: 29px; }
.status svg:nth-child(7) { margin-right: 26px; }
.status svg:nth-child(8) { margin-right: 33px; }

/* browser window */
.window { position: relative; height: 1618px; border-radius: 20px; overflow: hidden; background: #fff; }
.tabstrip { height: 88px; background: #eeeff1; display: flex; align-items: center; padding-left: 26px; }
.lights { display: flex; gap: 16px; width: 210px; }
.lights i { width: 24px; height: 24px; border-radius: 50%; }
.red { background: #f65a53; }
.amber { background: #f7b92f; }
.green { background: #3cc43c; }
.view-fox { width: 32px; height: 32px; }
.tabs { display: flex; height: 88px; margin-left: 28px; border-left: 2px solid #b5b5b8; padding-left: 8px; }
.tab { width: 292.500px; height: 72px; margin: 8px 0; padding: 0 31.500px 0 16px; display: flex; align-items: center; font-size: 21.500px; letter-spacing: .15px; color: #56565c; }
.tab.active { width: 284px; margin-left: -2px; padding-right: 23px; background: #fff; border-radius: 8px; box-shadow: 0 1px 7px rgba(0,0,0,.35); color: #15141a; }
.fav { width: 32px; height: 32px; }
.fav.wide { width: 36px; height: 40px; margin: -6px -4px 0 0; }
.label { flex: 1; margin-left: 11px; padding-top: 5px; overflow: hidden; white-space: nowrap; height: 34px; }
.fade { -webkit-mask-image: linear-gradient(90deg, #000 76%, transparent 99%); mask-image: linear-gradient(90deg, #000 76%, transparent 99%); }
.duo { height: 50px; display: flex; flex-direction: column; padding-top: 0; margin-top: 4px; }
.duo small { font-size: 16px; line-height: 18px; color: #6b6b70; }
.x { width: 18px; height: 18px; }
.newtab { width: 24px; height: 24px; margin-left: 31px; margin-top: 2px; }
.alltabs { width: 26px; height: 14px; margin-left: 56px; }

.toolbar { height: 82px; background: #f8f9f9; border-bottom: 2px solid #c4c4c4; display: flex; align-items: center; padding-left: 34px; }
.nav { width: 28px; height: 27px; margin-right: 44px; fill: none; stroke: #4a4a52; stroke-width: 2.600; }
.dim { stroke: #b3b3b7; }
.urlbar { width: 1955px; height: 64px; margin-left: 213px; background: #edeef0; border-radius: 8px; display: flex; align-items: center; padding: 0 16px; }
.u, .star, .t { fill: none; stroke: #4a4a52; stroke-width: 2.400; stroke-linejoin: round; }
.u:nth-child(1) { width: 30px; height: 32px; }
.u:nth-child(2) { width: 24px; height: 32px; margin-left: 29px; }
.u:nth-child(3) { width: 28px; height: 20px; margin-left: 30px; }
.u-share { width: 30px; height: 26px; margin-left: 12px; color: #d12a2a; }
.url { margin-left: 20px; padding-top: 2px; font-size: 27px; letter-spacing: -.03px; color: #808085; white-space: nowrap; }
.url b { font-weight: 400; color: #15141a; }
.star { width: 32px; height: 32px; margin-left: auto; }
.t1 { width: 30px; height: 28px; margin-left: 255px; }
.t2 { width: 30px; height: 34px; margin-left: 43px; }
.t3 { width: 24px; height: 20px; margin-left: 44px; }

/* screen sharing indicator */
.sharebar { position: absolute; left: 1060px; top: 187px; width: 757px; height: 64px; padding: 0 12px 0 12px; display: flex; align-items: center; background: #f8f9f9; border: 2px solid #9b9b9b; box-shadow: 0 8px 30px rgba(0,0,0,.35); font-weight: 500; font-size: 21.500px; letter-spacing: .1px; white-space: nowrap; }
.min { width: 36px; height: 36px; border-radius: 50%; background: #cdcecd; display: flex; align-items: center; justify-content: center; }
.min::before { content: ""; width: 20px; height: 4px; background: #333; }
.sep { width: 2px; height: 38px; margin: 0 32px 0 22px; background: #d4d4d4; }
.sb-share { width: 30px; height: 26px; color: #333; margin-right: 21px; }
.sb-text { width: 362px; }
.stop { width: 155px; height: 40px; margin-left: 31px; border-radius: 8px; background: #284fd9; color: #fff; }
.grip { width: 8px; height: 34px; margin-left: 31px; background: repeating-linear-gradient(#8c8c8c 0 2px, transparent 2px 6px); }

/* page */
.page { position: relative; height: 1448px; font-family: Lato, "Open Sans", sans-serif; }
.site-header { height: 202px; border-bottom: 16px solid #f6611e; display: flex; align-items: flex-start; }
.toggler { width: 160px; height: 185px; background: #fff; border: 2px solid #dedede; border-radius: 8px; display: flex; flex-direction: column; align-items: center; justify-content: center; gap: 12px; }
.toggler i { width: 48px; height: 4px; border-radius: 2px; background: #757575; }
.logo { width: 278px; height: 152px; margin: 16px 0 0 64px; }
.logo-virtual { font: 600 53px "Open Sans", sans-serif; fill: #235a92; }
.logo-labs { font: 300 64px "Open Sans", sans-serif; fill: #9bcf52; }
.logo-sub { font: 19px "Liberation Sans", sans-serif; fill: #777; stroke: #777; stroke-width: .3px; }
.pill { height: 91px; padding-bottom: 2px; border-radius: 32px; background: #3a80be; color: #fff; font-size: 34px; font-family: "Open Sans", sans-serif; letter-spacing: -.16px; white-space: nowrap; }
.bug { width: 284px; height: 90px; margin: 49px 20px 0 auto; font-family: Lato, sans-serif; font-size: 35px; letter-spacing: .3px; }
.tools { height: 219px; display: flex; align-items: flex-start; padding: 64px 0 0 18px; }
.tools-title { width: 128px; line-height: 105px; font-family: "Open Sans", sans-serif; font-size: 51px; color: #3d6fae; white-space: nowrap; }
.tools-chev { width: 18px; height: 28px; margin: 12px 0 0 16px; fill: none; stroke: #3d6fae; stroke-width: 3.600; }
.perf { width: 361px; margin-left: 47px; }
.valid { width: 312px; margin-left: 64px; }

.body { display: flex; height: 806px; }
.sidebar { width: 337px; border-right: 2px solid #e6e6e6; padding-left: 64px; font-family: "Open Sans", sans-serif; font-weight: 600; font-size: 38px; letter-spacing: .24px; color: #3d5a80; }
.sidebar a { display: block; height: 89.600px; line-height: 90.600px; white-space: nowrap; }
.sidebar .current { color: #f6611e; letter-spacing: -.2px; }
.content { width: 2353px; margin-left: 96px; }
.content h1 { padding: 46px 0 20px; line-height: 71px; font-size: 60px; font-weight: 500; letter-spacing: 1.770px; color: #3d8dc4; text-align: center; border-bottom: 2px solid #e3e8e8; }
.content h2 { margin-top: 78px; line-height: 60px; font-size: 50px; font-weight: 500; letter-spacing: 1.030px; color: #2c2c2e; text-decoration: underline; text-decoration-thickness: 2.500px; text-underline-offset: 6px; }
.content p { margin-top: 37px; line-height: 50px; font-size: 40px; letter-spacing: .220px; color: #000; white-space: nowrap; }

.footer { height: 221px; background: #111; color: #fff; padding: 20px 0 0 126px; display: flex; gap: 64px; font-size: 28px; overflow: hidden; }
.col { width: 832px; }
.col h3 { margin: 0 0 31px 4px; height: 62px; line-height: 40px; font-size: 29px; font-weight: 600; letter-spacing: .9px; background: linear-gradient(90deg, #50b3c9 166px, #484848 166px) bottom / 100% 4px no-repeat; }
.col p { line-height: 42px; white-space: nowrap; font-variant-numeric: oldstyle-nums; letter-spacing: .380px; }
.col .wide { letter-spacing: .650px; }
.social { display: flex; gap: 23px; padding-top: 9px; }
.social a { width: 72px; height: 72px; border-radius: 50%; display: flex; flex-direction: column; align-items: center; justify-content: center; }
.tw { background: #579ce4; }
.fb { background: #39498a; }
.yt { background: #d42b2b; font: 700 13px/14px "Liberation Sans", sans-serif; }
.you { transform: scale(.72, 1); }
.tube { width: 23px; height: 16px; border-radius: 4px; background: #fff; color: #d42b2b; font-size: 11px; line-height: 16px; text-align: center; letter-spacing: -.5px; }
.li { background: #2e59a5; font: 700 30px/30px "Open Sans", sans-serif; }
.social .li { padding-bottom: 3px; }
.hscroll { position: absolute; left: 1px; bottom: 1px; width: 1279px; height: 20px; border: 2px solid #3c3c3c; border-radius: 9px; background: rgba(0,0,0,.6); }

/* dock */
.dock { width: 2718px; height: 120px; margin: 2px auto 0; padding: 16px 0 0 16px; display: flex; gap: 25.050px; background: #676767; border: 2px solid #828282; border-radius: 32px; }
.ic { position: relative; flex: none; width: 72px; height: 74px; }
.ic > svg { width: 72px; height: 74px; filter: drop-shadow(0 1px 1px rgba(0,0,0,.3)); }
.run::after { content: ""; position: absolute; left: 31px; top: 90px; width: 8px; height: 8px; border-radius: 50%; background: #000; }
.div { flex: none; width: 2px; height: 88px; margin: -2px 9px 0; background: #333; }
.d2 { margin: -2px 8px 0; }
.cal { border-radius: 17px; background: linear-gradient(#e8483f 0 23px, #f8f8f7 23px); text-align: center; overflow: hidden; }
.mon { display: block; color: #fff; font-weight: 600; font-size: 14.500px; line-height: 26px; }
.day { display: block; font-size: 45px; line-height: 42px; font-weight: 300; color: #222; letter-spacing: -2px; }
.tv { border-radius: 17px; background: linear-gradient(#23332d, #0e1413); display: flex; align-items: center; justify-content: center; color: #fff; font-weight: 500; font-size: 29px; }
.ic > .tv-apple { width: 25px; height: 25px; fill: #fff; }
.badge { position: absolute; right: -11px; top: -9px; width: 34px; height: 35px; border-radius: 50%; background: #ee3b36; color: #fff; font-weight: 700; font-size: 18px; line-height: 35px; text-align: center; }
.tiny { font: 700 5px Inter, sans-serif; fill: #333; }
.pages-word { font: 9.500px Inter, sans-serif; fill: #fff; }

.cursor { position: absolute; left: 1202px; top: 910px; width: 22px; height: 36px; filter: drop-shadow(0 2px 2px rgba(0,0,0,.35)); }
```
